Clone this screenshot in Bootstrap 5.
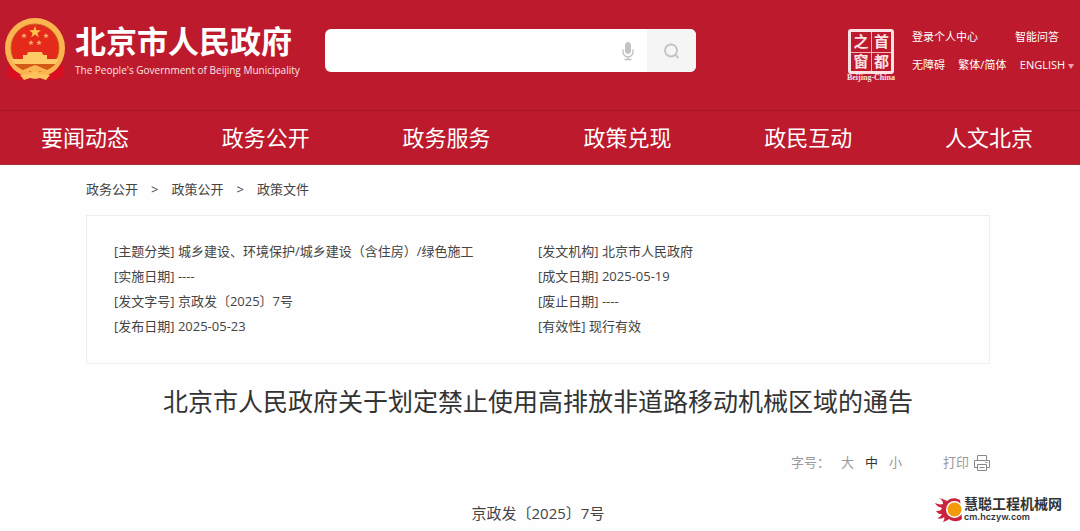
<!DOCTYPE html>
<html lang="zh-CN">
<head>
<meta charset="utf-8">
<meta name="viewport" content="width=device-width, initial-scale=1">
<title>北京市人民政府</title>
<link href="https://cdn.jsdelivr.net/npm/bootstrap@5.3.0/dist/css/bootstrap.min.css" rel="stylesheet">
<style>
  body { font-family: "Open Sans", "Noto Sans CJK SC", sans-serif; font-size: 13px; line-height: 25px; color: #444; background: #fefefe; }
  a { color: inherit; text-decoration: none; }
  .site-header { background: #be1a2d; color: #fff; }
  .masthead { min-height: 110px; padding: 18px 6px 24px 4px; }
  .emblem { width: 62px; height: 64px; }
  .brand { gap: 9px; width: 321px; }
  .brand-name { font-size: 31px; line-height: 38px; font-weight: 700; }
  .brand-sub { font-size: 10px; line-height: 20px; color: #fbe6e8; }
  .search-box { width: 371px; height: 43px; border-radius: 6px; margin-top: 11px; }
  .search-box input { font-size: 14px; box-shadow: none !important; }
  .search-box .btn { border-radius: 0; }
  .btn-find { width: 49px; background: #f5f5f5; }
  .btn-find:hover { background: #eee; }
  .capital { width: 50px; margin-top: 11px; }
  .seal { width: 46px; height: 45px; border: 3px solid #fbe3e5; border-radius: 3px; grid-template-columns: 1fr 1fr; grid-template-rows: 1fr 1fr; font-family: "Liberation Serif", "Noto Sans CJK SC", serif; font-size: 15px; font-weight: 700; line-height: 20px; overflow: hidden; color: #fbe3e5; }
  .seal span { text-align: center; }
  .seal .rt { border-left: 1px solid #f0b5bb; }
  .seal .dn { border-top: 1px solid #f0b5bb; line-height: 18px; }
  .seal-note { font-family: "Liberation Serif", serif; font-weight: 700; font-size: 8px; line-height: 8px; color: #fbe3e5; }
  .tools { font-size: 11px; line-height: 28px; margin-left: 16px; margin-top: 5px; width: 162px; }
  .tools .upper { padding-right: 15px; }
  .caret { font-size: 6px; color: #f0a5ad; vertical-align: 1px; }
  .main-nav { border-top: 1px solid #a31628; border-bottom: 1px solid #a3303c; padding: 0 47px 0 41px; font-size: 22px; line-height: 53px; }
  .page-body { padding: 0 90px 0 86px; }
  .crumbs { padding: 12px 0 13px; gap: 13px; }
  .info-panel { border: 1px solid #eee; border-radius: 0; padding: 23px 27px 24px; background: #fefefe; }
  .info-panel .row { --bs-gutter-x: 0; }
  .doc-title { font-size: 25px; line-height: 38px; color: #333; margin: 18px 0 30px; }
  .doc-tools { color: #999; gap: 11px; }
  .doc-tools .btn { font-size: inherit; line-height: inherit; color: inherit; border-radius: 0; }
  .doc-tools .btn.active { color: #333; border-color: transparent; }
  .doc-tools .print { margin-left: 30px; gap: 5px; }
  .doc-no { font-size: 15px; line-height: 30px; margin-top: 23px; }
  .partner { right: 18px; bottom: 5px; gap: 1px; color: #333; }
  .partner-name { font-size: 14px; line-height: 14px; font-weight: 700; }
  .partner-url { font-size: 9px; line-height: 12px; font-weight: 600; font-family: Inter, sans-serif; }
</style>
</head>
<body>
<header class="site-header">
  <div class="masthead d-flex align-items-start">
    <a class="brand d-flex align-items-start" href="#">
      <svg class="emblem flex-shrink-0" viewBox="0 0 62 64" aria-hidden="true">
        <path d="M7 43 L3 59 L16 63 L31 59 L46 63 L59 59 L55 43Z" fill="#d80f22"/>
        <circle cx="31" cy="30" r="27" fill="#e52a1c" stroke="#fbb550" stroke-width="6"/>
        <circle cx="31" cy="30" r="24" fill="none" stroke="#c8651d" stroke-width="1"/>
        <path d="M31 8l1.500 4.200h4.400l-3.500 2.700 1.300 4.300-3.700-2.600-3.700 2.600 1.300-4.300-3.500-2.700h4.400z" fill="#ffc44d"/>
        <g fill="#ffad60"><path id="st" d="M20 15l.8 1.800 2 .1-1.600 1.300.6 2-1.800-1.100-1.800 1.100.6-2-1.600-1.300 2-.1z"/><use href="#st" x="22"/><use href="#st" x="7" y="7"/><use href="#st" x="15" y="7"/></g>
        <path d="M24 34h14l1 3h4v4h12c-2 3-3 4-5 5H12c-2-1-3-2-5-5h12v-4h4z" fill="#ffc968"/>
        <path d="M10 46h42l-6 6H16z" fill="#d35a14"/>
        <path d="M6 36c1 8 6 13 13 16l7-3 5-2 5 2 7 3c7-3 12-8 13-16 2 12-4 18-13 20l-7-3-5 3-5-3-7 3C10 54 4 48 6 36z" fill="#fbb550"/>
        <path d="M16 57l10-1 5-3 5 3 10 1-4 5-6-2-5 1-5-1-6 2z" fill="#ffc35e"/>
        <path d="M3 47l9 7-3 6-6-3zM59 47l-9 7 3 6 6-3z" fill="#d90d20"/>
      </svg>
      <span class="d-flex flex-column text-nowrap pt-1">
        <span class="brand-name">北京市人民政府</span>
        <span class="brand-sub">The People's Government of Beijing Municipality</span>
      </span>
    </a>
    <form class="search-box d-flex bg-white overflow-hidden" role="search">
      <input class="form-control border-0 bg-transparent" type="text" aria-label="搜索">
      <button class="btn border-0 px-2 d-flex flex-shrink-0 align-items-center" type="button" aria-label="语音">
        <svg width="22" height="22" viewBox="0 0 22 22" fill="none" stroke="#c3c3c3"><rect x="8.500" y="2.500" width="5" height="11" rx="2.500" fill="#c3c3c3"/><path d="M6 9.500v2.500a5 5 0 0 0 10 0V9.500M11 17v2.500M7.500 19.500h7" stroke-width="1.500"/></svg>
      </button>
      <button class="btn btn-find border-0 p-0 d-flex flex-shrink-0 align-items-center justify-content-center" type="submit" aria-label="查找">
        <svg width="18" height="18" viewBox="0 0 18 18" fill="none" stroke="#c3c3c3" stroke-width="1.800"><circle cx="8" cy="8.500" r="6"/><path d="M12.500 13l3 3"/></svg>
      </button>
    </form>
    <a class="capital d-flex flex-column align-items-center ms-auto" href="#">
      <span class="seal d-grid"><span>之</span><span class="rt">首</span><span class="dn">窗</span><span class="rt dn">都</span></span>
      <span class="seal-note text-nowrap">Beijing-China</span>
    </a>
    <div class="tools text-nowrap">
      <div class="upper d-flex justify-content-between"><a href="#">登录个人中心</a><a href="#">智能问答</a></div>
      <div class="d-flex justify-content-between"><a href="#">无障碍</a><a href="#">繁体/简体</a><a href="#">ENGLISH <span class="caret">▼</span></a></div>
    </div>
  </div>
  <nav class="main-nav d-flex justify-content-between">
    <a href="#">要闻动态</a><a href="#">政务公开</a><a href="#">政务服务</a><a href="#">政策兑现</a><a href="#">政民互动</a><a href="#">人文北京</a>
  </nav>
</header>
<main class="page-body position-relative">
  <nav class="crumbs d-flex" aria-label="位置">
    <a href="#">政务公开</a><span>&gt;</span><a href="#">政策公开</a><span>&gt;</span><a href="#">政策文件</a>
  </nav>
  <section class="info-panel card">
    <div class="row">
      <div class="col-6">
        <div>[主题分类] 城乡建设、环境保护/城乡建设（含住房）/绿色施工</div>
        <div>[实施日期] ----</div>
        <div>[发文字号] 京政发〔2025〕7号</div>
        <div>[发布日期] 2025-05-23</div>
      </div>
      <div class="col-6">
        <div>[发文机构] 北京市人民政府</div>
        <div>[成文日期] 2025-05-19</div>
        <div>[废止日期] ----</div>
        <div>[有效性] 现行有效</div>
      </div>
    </div>
  </section>
  <h1 class="doc-title text-center fw-normal">北京市人民政府关于划定禁止使用高排放非道路移动机械区域的通告</h1>
  <div class="doc-tools d-flex justify-content-end align-items-center">
    <span>字号：</span>
    <button type="button" class="btn border-0 p-0">大</button>
    <button type="button" class="btn border-0 p-0 active">中</button>
    <button type="button" class="btn border-0 p-0">小</button>
    <button type="button" class="btn border-0 p-0 print d-flex align-items-center">打印
      <svg width="16" height="16" viewBox="0 0 16 16" fill="none" stroke="#888"><path d="M3.500 5.500v-5h9v5M3.500 12.500h-3v-7h15v7h-3M3.500 9.500h9v6h-9zM5.500 12.500h5M11.500 7.500h2"/></svg>
    </button>
  </div>
  <p class="doc-no text-center mb-0">京政发〔2025〕7号</p>
  <a class="partner position-absolute d-flex align-items-center" href="#">
    <svg width="28" height="26" viewBox="0 0 28 26" aria-hidden="true">
      <path d="M25 3C20 0 15 1 12 4 10 3 8 2 4 1c3 2 4 3 4 6-3 1-5 0-8-1 2 4 5 4 7 5-1 3-4 3-6 3 2 3 4 3 6 3-1 2-3 4-5 4 3 1 5 1 7-1 1 2 0 3-1 5 3-1 5-2 6-3 4 3 9 3 13 0z" fill="#c9243f"/>
      <circle cx="19.500" cy="12.500" r="8.500" fill="#fff"/><circle cx="19.500" cy="12.500" r="7" fill="#f39a0b"/>
    </svg>
    <span class="d-flex flex-column text-nowrap"><span class="partner-name">慧聪工程机械网</span><span class="partner-url">cm.hczyw.com</span></span>
  </a>
</main>
</body>
</html>
